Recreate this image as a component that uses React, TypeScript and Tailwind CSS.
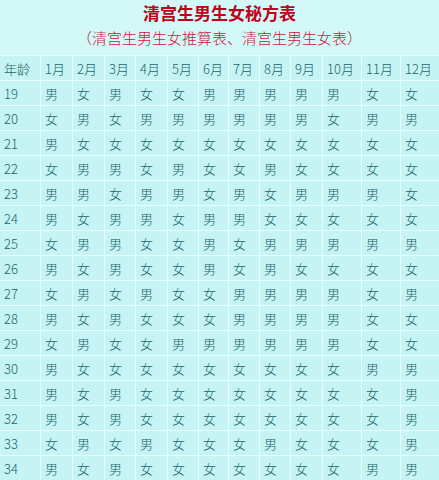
import React from "react";

const months = ["1月", "2月", "3月", "4月", "5月", "6月", "7月", "8月", "9月", "10月", "11月", "12月"];

// M = 男, F = 女, one string per age, January..December
const chart: [string, string][] = [
  ["19", "MFMFFMMMMMFF"],
  ["20", "FMFMMMMMMFMM"],
  ["21", "MFFFFFFFFFFF"],
  ["22", "FMMFMFFMFFFF"],
  ["23", "MMFMMFMFMMMF"],
  ["24", "MFMMFMMFFFFF"],
  ["25", "FMMFFMFMMMMM"],
  ["26", "MFMFFMFMFFFF"],
  ["27", "FMFMFFMMMMFM"],
  ["28", "MFMFFFMMMMFF"],
  ["29", "FMFFMMMMMMFF"],
  ["30", "MFFFFFFFFFMM"],
  ["31", "MFMFFFFFFFFM"],
  ["32", "MFMFFFFFFFFM"],
  ["33", "FMFMFFFMFFFM"],
  ["34", "MFMFFFFFFFMM"],
];

const cell = "h-[25px] pl-[4px] flex items-center border-l border-t border-[#e6ffff] bg-[#c6f4f4] text-[13px] font-light leading-none text-[#1a6468]";

function Row({ label, values }: { label: string; values: string[] }) {
  return (
    <>
      <div className={`${cell} border-l-0 pl-[4px]`}>{label}</div>
      {values.map((v, i) => (
        <div key={i} className={cell}>
          {v}
        </div>
      ))}
    </>
  );
}

export default function App() {
  return (
    <div
      className="w-[439px] h-[480px] overflow-hidden bg-[#d2f8f8]"
      style={{ fontFamily: '"Noto Sans CJK SC", "Liberation Sans", sans-serif' }}
    >
      <div className="h-[55px] flex flex-col items-center">
        <h1 className="h-[25px] flex items-center text-[17px] font-bold text-[#c00018] leading-none">
          清宫生男生女秘方表
        </h1>
        <p className="h-[25px] flex items-center text-[15px] font-light text-[#cc1a3a] leading-none">
          （清宫生男生女推算表、清宫生男生女表）
        </p>
      </div>
      <div className="grid grid-cols-[40px_32px_32px_31px_32px_31px_30px_31px_31px_32px_39px_39px_39px]">
        <Row label="年龄" values={months} />
        {chart.map(([age, s]) => (
          <Row key={age} label={age} values={s.split("").map((c) => (c === "M" ? "男" : "女"))} />
        ))}
      </div>
    </div>
  );
}
